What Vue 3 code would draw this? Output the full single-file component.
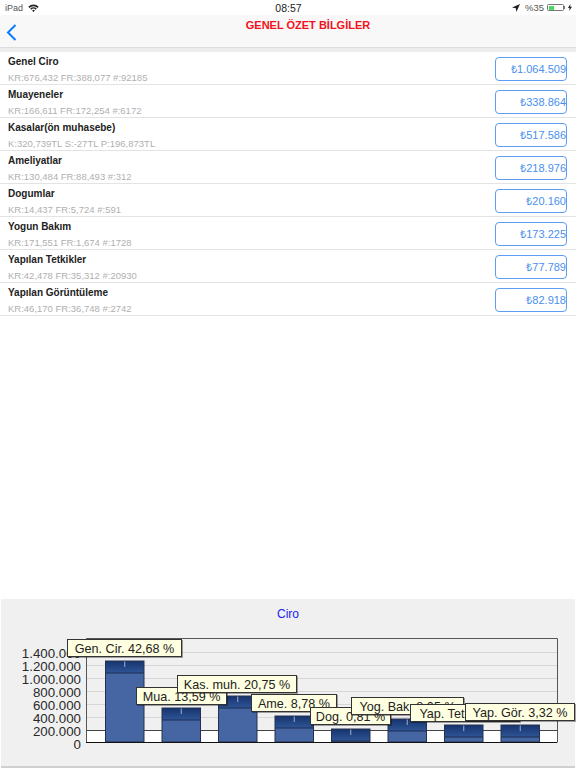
<template>
  <div class="page">
    <div class="status-bar">
      <div class="status-left">
        <span>iPad</span>
        <svg width="11" height="8" viewBox="0 0 11 8">
          <path d="M0.3 2.8 A7.2 7.2 0 0 1 10.7 2.8 L9.6 3.9 A5.7 5.7 0 0 0 1.4 3.9 Z" fill="#222" />
          <path d="M2.2 4.6 A4.6 4.6 0 0 1 8.8 4.6 L7.7 5.7 A3.1 3.1 0 0 0 3.3 5.7 Z" fill="#222" />
          <path d="M4.1 6.5 A2 2 0 0 1 6.9 6.5 L5.5 8 Z" fill="#222" />
        </svg>
      </div>
      <div class="status-time">08:57</div>
      <div class="status-right">
        <svg width="8" height="8" viewBox="0 0 8 8">
          <path d="M8 0 L0 3.6 L3.8 4.2 L4.4 8 Z" fill="#222" />
        </svg>
        <span class="percent">%35</span>
        <div class="battery">
          <div class="battery-fill"></div>
        </div>
        <div class="battery-nub"></div>
        <svg class="bolt" width="4" height="7" viewBox="0 0 4 7">
          <path d="M2.4 0 L0 4 H1.6 L1.2 7 L4 2.8 H2.2 Z" fill="#222" />
        </svg>
      </div>
    </div>

    <div class="nav-bar">
      <svg class="back" width="11" height="17" viewBox="0 0 11 17">
        <path d="M9.5 1 L2 8.5 L9.5 16" fill="none" stroke="#0a7cff" stroke-width="2" />
      </svg>
      <div class="nav-title">GENEL ÖZET BİLGİLER</div>
    </div>
    <div class="nav-shadow"></div>

    <div class="list">
      <div v-for="row in rows" :key="row.title" class="row">
        <div class="row-text">
          <div class="row-title">{{ row.title }}</div>
          <div class="row-sub">{{ row.sub }}</div>
        </div>
        <div class="amount">{{ row.amount }}</div>
      </div>
    </div>

    <div class="spacer"></div>

    <div class="chart-panel">
      <div class="chart-title">Ciro</div>
      <div class="chart-canvas">
        <svg width="574" height="135" viewBox="1 630 574 135">
          <defs>
            <linearGradient id="barTop" x1="0" y1="0" x2="0" y2="1">
              <stop offset="0" stop-color="#16336e" />
              <stop offset="1" stop-color="#2f5596" />
            </linearGradient>
          </defs>
          <rect x="86" y="638" width="471" height="92" fill="#f0f0f0" />
          <rect x="86" y="730" width="471" height="12" fill="#fff" />
          <line
            v-for="y in grid"
            :key="y"
            x1="86"
            x2="557"
            :y1="y"
            :y2="y"
            stroke="#d6d6d6"
          />
          <line x1="86" x2="557" y1="730.5" y2="730.5" stroke="#444" />
          <path d="M86.5 742.5 V638.5 H557.5 V742.5" fill="none" stroke="#555" />
          <text
            v-for="label in axis"
            :key="label.text"
            class="axis-label"
            x="81"
            :y="label.y"
            text-anchor="end"
          >{{ label.text }}</text>
          <g v-for="bar in bars" :key="bar.x">
            <rect :x="bar.x" :y="bar.top" width="38.5" :height="742 - bar.top" fill="#4565a3" />
            <rect :x="bar.x" :y="bar.top" width="38.5" :height="Math.min(12, 742 - bar.top)" fill="url(#barTop)" />
            <line :x1="bar.x" :x2="bar.x + 38.5" :y1="bar.top + 12" :y2="bar.top + 12" stroke="#1c2c50" />
            <line :x1="bar.x + 19.25" :x2="bar.x + 19.25" :y1="bar.top" :y2="bar.top + 6" stroke="#9fb0d0" />
            <rect :x="bar.x" :y="bar.top" width="38.5" :height="742 - bar.top" fill="none" stroke="#26324d" />
          </g>
          <line x1="86" x2="557" y1="742.5" y2="742.5" stroke="#111" stroke-width="1.2" />
        </svg>
        <div
          v-for="tip in tips"
          :key="tip.text"
          class="tip"
          :style="{ left: tip.x - 1 + 'px', top: tip.y - 630 + 'px', width: tip.w + 'px' }"
        >{{ tip.text }}</div>
      </div>
    </div>
  </div>
</template>

<script setup>
const rows = [
  { title: "Genel Ciro", sub: "KR:676,432 FR:388,077 #:92185", amount: "₺1.064.509" },
  { title: "Muayeneler", sub: "KR:166,611 FR:172,254 #:6172", amount: "₺338.864" },
  { title: "Kasalar(ön muhasebe)", sub: "K:320,739TL S:-27TL P:196,873TL", amount: "₺517.586" },
  { title: "Ameliyatlar", sub: "KR:130,484 FR:88,493 #:312", amount: "₺218.976" },
  { title: "Dogumlar", sub: "KR:14,437 FR:5,724 #:591", amount: "₺20.160" },
  { title: "Yogun Bakım", sub: "KR:171,551 FR:1,674 #:1728", amount: "₺173.225" },
  { title: "Yapılan Tetkikler", sub: "KR:42,478 FR:35,312 #:20930", amount: "₺77.789" },
  { title: "Yapılan Görüntüleme", sub: "KR:46,170 FR:36,748 #:2742", amount: "₺82.918" },
];

// grafik çizgileri ve eksen yazıları
const grid = [652.5, 665.5, 678.5, 691.5, 704.5, 717.5];

const axis = [
  { text: "1.400.000", y: 658 },
  { text: "1.200.000", y: 671 },
  { text: "1.000.000", y: 684 },
  { text: "800.000", y: 696.5 },
  { text: "600.000", y: 710 },
  { text: "400.000", y: 723 },
  { text: "200.000", y: 736 },
  { text: "0", y: 749 },
];

const bars = [
  { x: 105.5, top: 661 },
  { x: 162, top: 708 },
  { x: 218.5, top: 696 },
  { x: 275, top: 716 },
  { x: 331.5, top: 729 },
  { x: 388, top: 719 },
  { x: 444.5, top: 725 },
  { x: 501, top: 725 },
];

const tips = [
  { text: "Gen. Cir. 42,68 %", x: 67, y: 639, w: 115 },
  { text: "Mua. 13,59 %", x: 136, y: 687, w: 91 },
  { text: "Kas. muh. 20,75 %", x: 177, y: 675, w: 120 },
  { text: "Ame. 8,78 %", x: 251, y: 694, w: 86 },
  { text: "Dog. 0,81 %", x: 310, y: 707, w: 81 },
  { text: "Yog. Bak. 8,05 %", x: 351, y: 697, w: 113 },
  { text: "Yap. Tet. 3,12 %", x: 410, y: 704, w: 110 },
  { text: "Yap. Gör. 3,32 %", x: 465, y: 703, w: 110 },
];
</script>

<style scoped>
.page {
  display: flex;
  flex-direction: column;
  width: 576px;
  height: 768px;
  overflow: hidden;
  background: #fff;
  font-family: "Liberation Sans", Arial, sans-serif;
}

.status-bar {
  display: grid;
  grid-template-columns: 1fr auto 1fr;
  align-items: center;
  height: 15px;
  padding: 0 4px 0 5px;
  font-size: 9px;
  color: #222;
}

.status-left {
  display: flex;
  align-items: center;
  gap: 5px;
  color: #555;
}

.status-time {
  font-size: 10.5px;
  font-weight: 500;
}

.status-right {
  display: flex;
  align-items: center;
  justify-content: flex-end;
  gap: 3px;
}

.percent {
  margin-left: 2px;
  font-size: 9.5px;
  color: #555;
}

.battery {
  box-sizing: border-box;
  width: 17px;
  height: 7px;
  padding: 0.5px;
  border: 0.5px solid #777;
  border-radius: 1.5px;
}

.battery-fill {
  width: 38%;
  height: 100%;
  background: #4cd964;
}

.battery-nub {
  width: 1px;
  height: 3px;
  margin-left: -3px;
  background: #777;
}

.nav-bar {
  position: relative;
  height: 32px;
  background: #f8f8f8;
}

.back {
  position: absolute;
  left: 5.5px;
  top: 9px;
}

.nav-title {
  padding: 3px 0 0 40px;
  font-size: 11px;
  line-height: 14px;
  font-weight: 700;
  text-align: center;
  color: #f5111b;
}

.nav-shadow {
  height: 5px;
  background: #ececec;
  border-top: 1px solid #dcdcdc;
  box-sizing: border-box;
}

.row {
  display: flex;
  align-items: center;
  justify-content: space-between;
  box-sizing: border-box;
  height: 33px;
  padding: 2px 9px 0 8px;
  border-bottom: 1px solid #e3e3e3;
}

.row-title {
  font-size: 10px;
  line-height: 12px;
  font-weight: 700;
  color: #222;
}

.row-sub {
  margin-top: 4px;
  font-size: 9.5px;
  line-height: 11px;
  color: #b0b0b0;
}

.amount {
  box-sizing: border-box;
  width: 72px;
  height: 24px;
  margin-top: -1px;
  border: 1px solid #5c9cf5;
  border-radius: 4px;
  font-size: 11px;
  line-height: 22px;
  text-align: right;
  white-space: nowrap;
  color: #4a90ee;
}

.spacer {
  flex: 1;
}

.chart-panel {
  box-sizing: border-box;
  flex: none;
  height: 169px;
  margin: 0 1px;
  padding-top: 8px;
  background: #f0f0f0;
  border-bottom: 2px solid #cfcfcf;
}

.chart-title {
  height: 23px;
  font-size: 12px;
  line-height: 14px;
  text-align: center;
  color: #2020f0;
}

.chart-canvas {
  position: relative;
  height: 135px;
}

.chart-canvas svg {
  display: block;
}

.axis-label {
  font-size: 13.3px;
  fill: #2a2a2a;
}

.tip {
  position: absolute;
  box-sizing: border-box;
  height: 18px;
  border: 1px solid #333;
  border-width: 0.5px 1px 1px 0.5px;
  background: #ffffe1;
  box-shadow: 1px 1px 0 rgba(0, 0, 0, 0.35);
  font-size: 12.6px;
  line-height: 18px;
  text-align: center;
  white-space: nowrap;
  overflow: hidden;
  color: #222;
}
</style>
